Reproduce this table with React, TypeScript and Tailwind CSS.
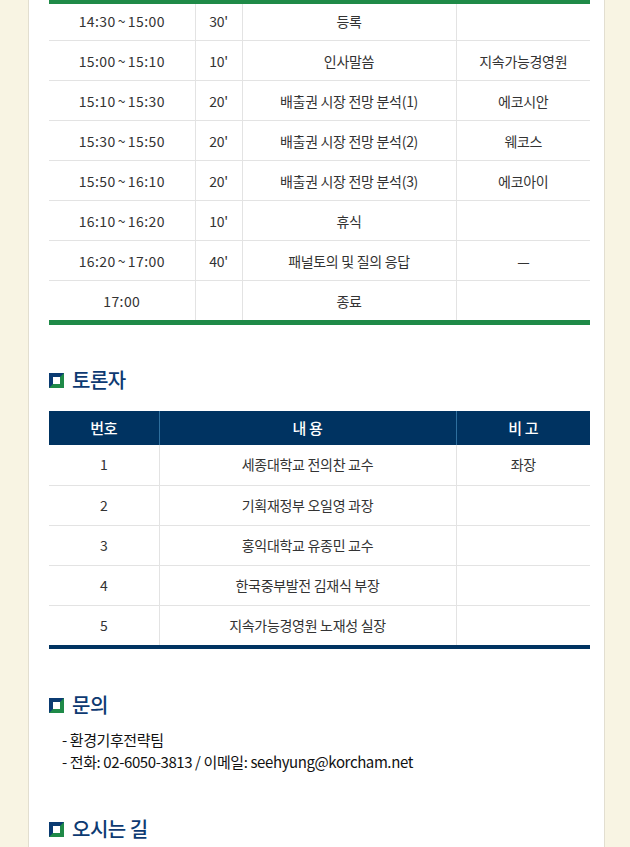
import type { JSX } from "react";

const font = { fontFamily: '"Noto Sans CJK KR", "Noto Sans", sans-serif' };

const schedule: [string, string, string, string][] = [
  ["14:30~15:00", "30'", "등록", ""],
  ["15:00~15:10", "10'", "인사말씀", "지속가능경영원"],
  ["15:10~15:30", "20'", "배출권 시장 전망 분석(1)", "에코시안"],
  ["15:30~15:50", "20'", "배출권 시장 전망 분석(2)", "웨코스"],
  ["15:50~16:10", "20'", "배출권 시장 전망 분석(3)", "에코아이"],
  ["16:10~16:20", "10'", "휴식", ""],
  ["16:20~17:00", "40'", "패널토의 및 질의 응답", "—"],
  ["17:00", "", "종료", ""],
];

const panel: [string, string, string][] = [
  ["1", "세종대학교 전의찬 교수", "좌장"],
  ["2", "기획재정부 오일영 과장", ""],
  ["3", "홍익대학교 유종민 교수", ""],
  ["4", "한국중부발전 김재식 부장", ""],
  ["5", "지속가능경영원 노재성 실장", ""],
];

function SectionTitle({ title }: { title: string }): JSX.Element {
  return (
    <div className="flex items-center gap-[8px]">
      <svg width="15" height="15" viewBox="0 0 15 15">
        <rect width="15" height="15" fill="#0b3b72" />
        <polygon points="15,0 15,15 0,15" fill="#1f8a48" />
        <rect x="4" y="4" width="7" height="7" fill="#ffffff" />
      </svg>
      <h3 className="text-[20px] font-medium leading-none text-[#0d3a72] tracking-[-0.5px]">{title}</h3>
    </div>
  );
}

function Time({ value }: { value: string }): JSX.Element {
  const [a, b] = value.split("~");
  if (!b) return <span className="tracking-[0.4px]">{a}</span>;
  return (
    <span className="tracking-[0.4px]">
      {a}
      <span className="mx-[2px]">~</span>
      {b}
    </span>
  );
}

export default function App(): JSX.Element {
  return (
    <div className="min-h-[847px] bg-[#f8f4e3] pl-[28px]" style={font}>
      <div className="w-[577px] min-h-[847px] bg-white border-x border-[#e2ded0] pl-[20px] pr-[14px]">
        <div className="border-t-[4px] border-b-[5px] border-[#1f8a48]">
          <table className="w-full table-fixed border-collapse text-[14px] text-[#333] text-center tracking-[-0.3px]">
            <colgroup>
              <col className="w-[146px]" />
              <col className="w-[47px]" />
              <col className="w-[214px]" />
              <col />
            </colgroup>
            <tbody>
              {schedule.map((r, i) => (
                <tr key={i} className={i === 0 ? "h-[36px]" : "h-[40px]"}>
                  {r.map((c, j) => (
                    <td
                      key={j}
                      className={`${i < schedule.length - 1 ? "border-b" : ""} ${j < 3 ? "border-r" : ""} border-[#e3e3e3] p-0 ${i === 0 ? "" : "pt-[2px]"}`}
                    >
                      {j === 0 ? <Time value={c} /> : c}
                    </td>
                  ))}
                </tr>
              ))}
            </tbody>
          </table>
        </div>

        <div className="mt-[45px]">
          <SectionTitle title="토론자" />
        </div>

        <div className="mt-[21px] border-b-[4px] border-[#003361]">
          <table className="w-full table-fixed border-collapse text-[14px] text-[#333] text-center tracking-[-0.3px]">
            <colgroup>
              <col className="w-[110px]" />
              <col className="w-[297px]" />
              <col />
            </colgroup>
            <thead>
              <tr className="h-[34px] bg-[#003361] text-white text-[15px] font-medium">
                <th className="border-r border-[#2e6f9e] p-0 font-medium">번호</th>
                <th className="border-r border-[#2e6f9e] p-0 font-medium">내 용</th>
                <th className="p-0 font-medium">비 고</th>
              </tr>
            </thead>
            <tbody>
              {panel.map((r, i) => (
                <tr key={i} className="h-[40px]">
                  {r.map((c, j) => (
                    <td
                      key={j}
                      className={`${i < panel.length - 1 ? "border-b" : ""} ${j < 2 ? "border-r" : ""} border-[#e3e3e3] p-0`}
                    >
                      {c}
                    </td>
                  ))}
                </tr>
              ))}
            </tbody>
          </table>
        </div>

        <div className="mt-[46px]">
          <SectionTitle title="문의" />
        </div>
        <ul className="mt-[14px] pl-[13px] text-[15px] leading-[22px] text-[#111] tracking-[-0.4px]">
          <li>- 환경기후전략팀</li>
          <li>- 전화: 02-6050-3813 / 이메일: seehyung@korcham.net</li>
        </ul>

        <div className="mt-[46px]">
          <SectionTitle title="오시는 길" />
        </div>
      </div>
    </div>
  );
}
